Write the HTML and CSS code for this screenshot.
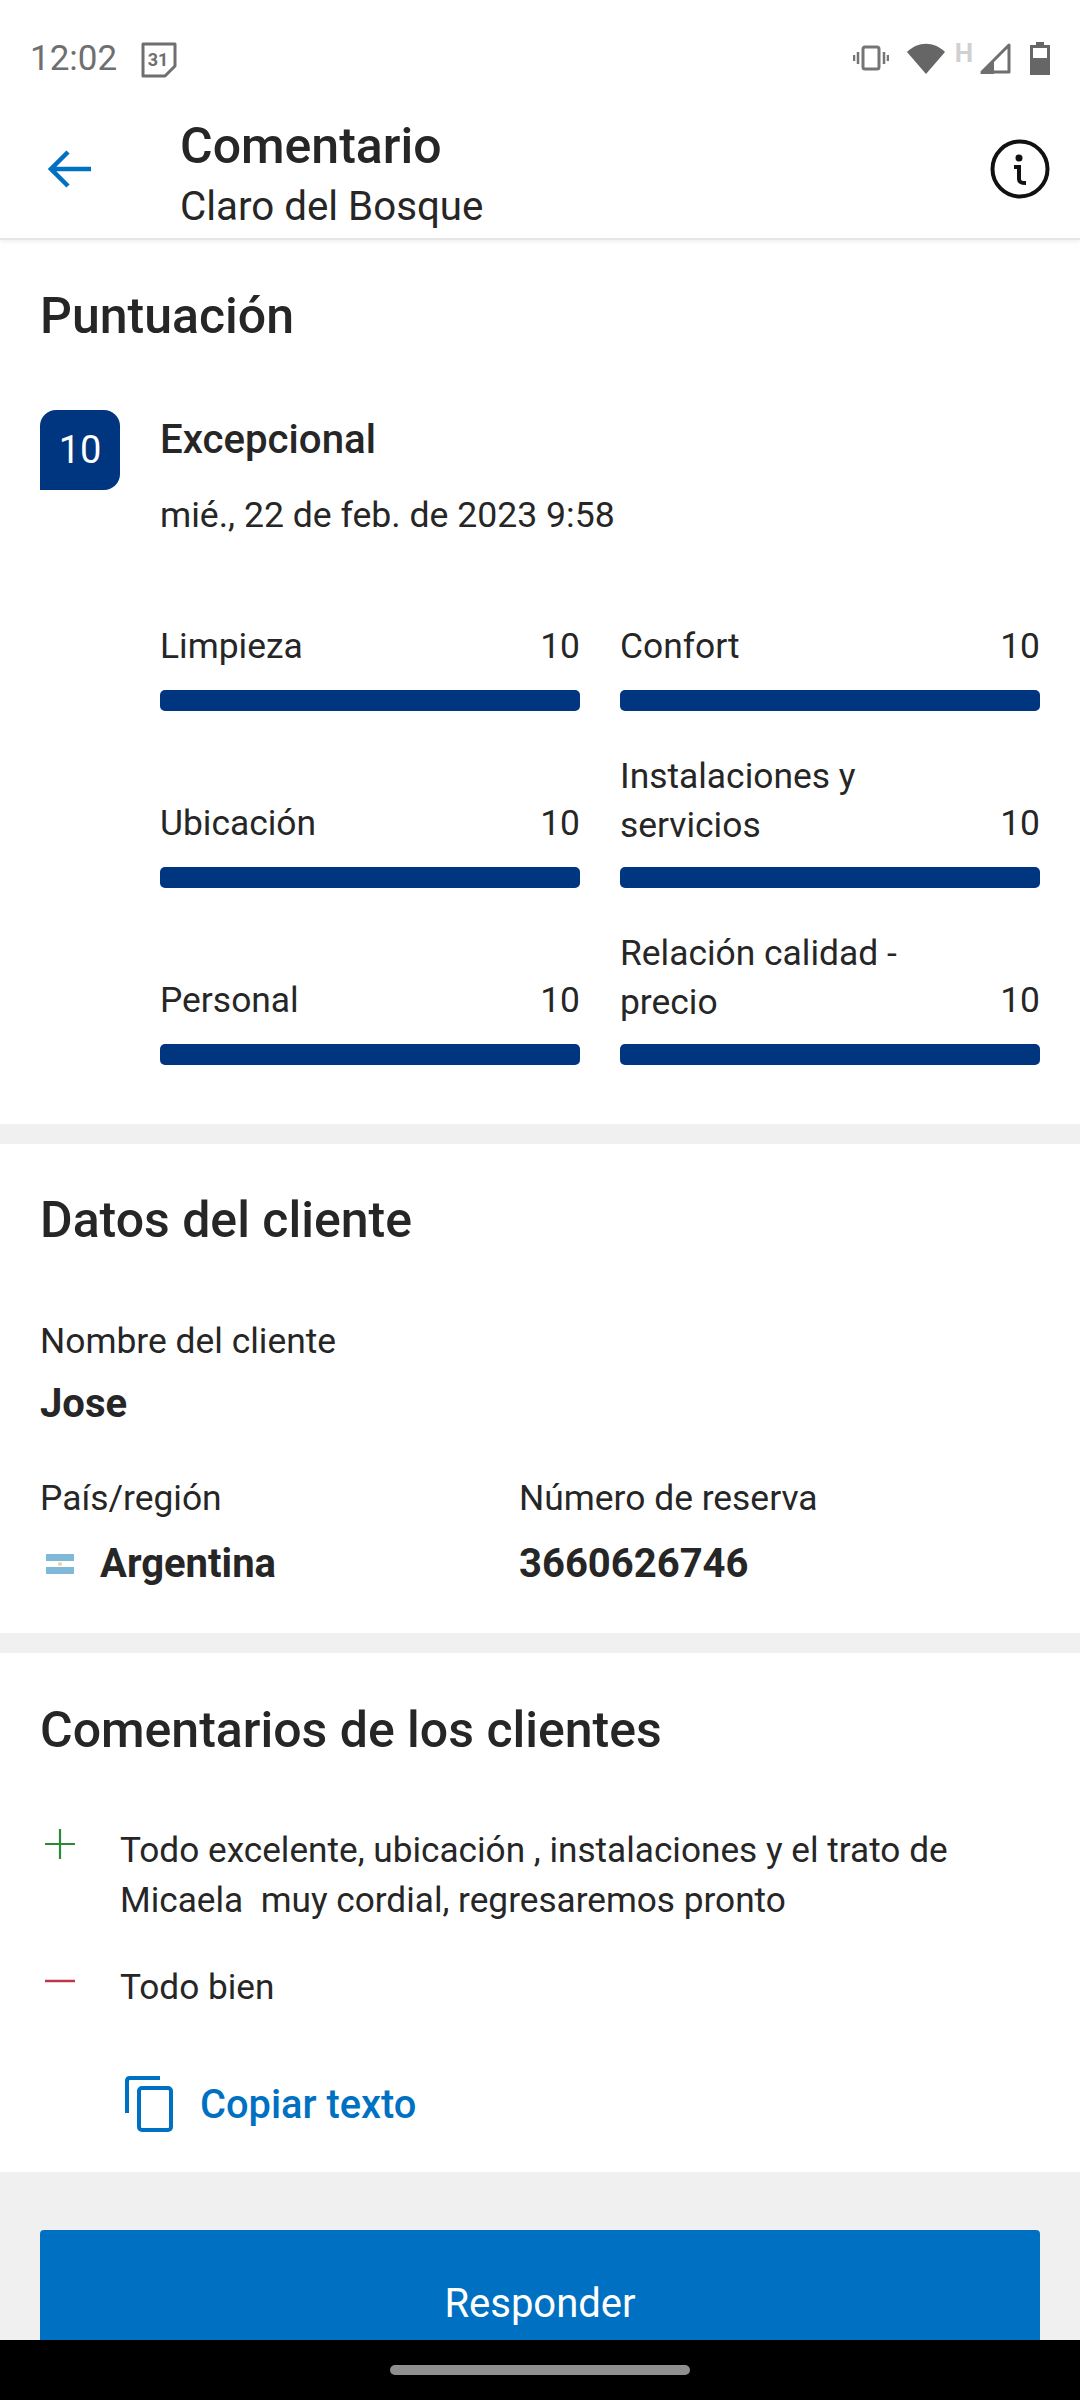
FILE: index.html
```html
<!DOCTYPE html>
<html>
  <head>
    <title>Comentario</title>
    <meta content="width=device-width,minimum-scale=1.0,maximum-scale=1.0,user-scalable=no" name="viewport">
    <link rel="stylesheet" href="styles.css">
  </head>
<body>
  <div class="screen">
    <div class="status-bar">
      <span class="status-time">12:02</span>
      <svg class="status-calendar" width="36" height="36" viewBox="0 0 36 36">
        <path d="M2 2h32v22l-10 10H2z" fill="none" stroke="#6f6f6f" stroke-width="3" stroke-linejoin="round"/>
        <text x="17" y="24" text-anchor="middle" class="calendar-day">31</text>
      </svg>
      <div class="status-icons">
        <svg width="36" height="26" viewBox="0 0 36 26">
          <rect x="10" y="2" width="16" height="22" rx="2" fill="none" stroke="#757575" stroke-width="3"/>
          <path d="M5 7v12M1 10v6M31 7v12M35 10v6" stroke="#757575" stroke-width="2.5"/>
        </svg>
        <svg class="icon-wifi" width="38" height="32" viewBox="0 0 38 32">
          <path d="M19 32L0 10C11 -1 27 -1 38 10z" fill="#666"/>
        </svg>
        <span class="status-h">H</span>
        <svg class="icon-signal" width="32" height="32" viewBox="0 0 32 32">
          <path d="M30 3v27H3z" fill="none" stroke="#6f6f6f" stroke-width="3" stroke-linejoin="round"/>
          <path d="M1 32L15 18v14z" fill="#6f6f6f"/>
        </svg>
        <svg class="icon-battery" width="20" height="33" viewBox="0 0 20 33">
          <path d="M6 0h8v3h6v30H0V3h6z" fill="#666"/>
          <rect x="3" y="6" width="14" height="10" fill="#fff"/>
        </svg>
      </div>
    </div>

    <header class="top-bar">
      <svg class="back-arrow" width="44" height="40" viewBox="0 0 44 40">
        <path d="M43 20H4M20 3L3 20l17 17" fill="none" stroke="#0071c2" stroke-width="4.5"/>
      </svg>
      <div class="top-titles">
        <h1>Comentario</h1>
        <p>Claro del Bosque</p>
      </div>
      <svg class="info-icon" width="60" height="60" viewBox="0 0 60 60">
        <circle cx="30" cy="30" r="27.5" fill="none" stroke="#111" stroke-width="4"/>
        <circle cx="29" cy="19" r="3.5" fill="#111"/>
        <path d="M24 28h5v12c0 3 2 4 7 4" fill="none" stroke="#111" stroke-width="4"/>
      </svg>
    </header>

    <section class="card card-score">
      <h2>Puntuación</h2>
      <div class="score">
        <div class="score-badge">10</div>
        <div>
          <div class="score-title">Excepcional</div>
          <div class="score-date">mié., 22 de feb. de 2023 9:58</div>
        </div>
      </div>
      <div class="ratings">
        <div class="rating">
          <div class="rating-head"><span>Limpieza</span><span>10</span></div>
          <div class="rating-bar"></div>
        </div>
        <div class="rating">
          <div class="rating-head"><span>Confort</span><span>10</span></div>
          <div class="rating-bar"></div>
        </div>
        <div class="rating">
          <div class="rating-head"><span>Ubicación</span><span>10</span></div>
          <div class="rating-bar"></div>
        </div>
        <div class="rating">
          <div class="rating-head"><span class="rating-long">Instalaciones y servicios</span><span>10</span></div>
          <div class="rating-bar"></div>
        </div>
        <div class="rating">
          <div class="rating-head"><span>Personal</span><span>10</span></div>
          <div class="rating-bar"></div>
        </div>
        <div class="rating">
          <div class="rating-head"><span class="rating-long">Relación calidad - precio</span><span>10</span></div>
          <div class="rating-bar"></div>
        </div>
      </div>
    </section>

    <section class="card card-guest">
      <h2>Datos del cliente</h2>
      <div class="field field-name">
        <div class="field-label">Nombre del cliente</div>
        <div class="field-value">Jose</div>
      </div>
      <div class="field-row">
        <div class="field">
          <div class="field-label">País/región</div>
          <div class="field-value country">
            <svg width="28" height="20" viewBox="0 0 28 20">
              <rect width="28" height="20" fill="#7fb8d8"/>
              <rect y="7" width="28" height="6" fill="#fff"/>
              <circle cx="14" cy="10" r="2" fill="#e8d9a0"/>
            </svg>
            Argentina
          </div>
        </div>
        <div class="field">
          <div class="field-label">Número de reserva</div>
          <div class="field-value">3660626746</div>
        </div>
      </div>
    </section>

    <section class="card card-comments">
      <h2>Comentarios de los clientes</h2>
      <div class="comment comment-plus">
        <svg width="30" height="30" viewBox="0 0 30 30">
          <path d="M0 15h30M15 0v30" stroke="#2a8a36" stroke-width="2.2"/>
        </svg>
        <p>Todo excelente, ubicación , instalaciones y el trato de Micaela&nbsp; muy cordial, regresaremos pronto</p>
      </div>
      <div class="comment comment-minus">
        <svg width="30" height="30" viewBox="0 0 30 30">
          <path d="M0 15h30" stroke="#b8384a" stroke-width="2.5"/>
        </svg>
        <p>Todo bien</p>
      </div>
      <div class="copy-link">
        <svg width="48" height="56" viewBox="0 0 48 56">
          <path d="M2 37V5q0-3 3-3h30" fill="none" stroke="#0071c2" stroke-width="4"/>
          <rect x="14" y="12" width="32" height="42" rx="3" fill="none" stroke="#0071c2" stroke-width="4"/>
        </svg>
        <span>Copiar texto</span>
      </div>
    </section>

    <div class="actions">
      <button type="button">Responder</button>
    </div>

    <div class="nav-bar"><div class="nav-handle"></div></div>
  </div>
</body>
</html>
```

FILE: styles.css
```css
html, body {
  margin: 0;
  padding: 0;
}

body {
  background: #f0f0f0;
  color: #262626;
  font-family: Roboto, "Noto Sans", sans-serif;
}

h1, h2, p {
  margin: 0;
}

.screen {
  position: relative;
  width: 1080px;
  height: 2400px;
  overflow: hidden;
}

/* status bar */
.status-bar {
  display: flex;
  align-items: center;
  height: 100px;
  padding: 38px 30px 22px;
  box-sizing: border-box;
  background: white;
}

.status-time {
  font-size: 35px;
  color: #6f6f6f;
}

.status-calendar {
  margin: 3px 0 0 24px;
}

.calendar-day {
  font-family: Roboto, sans-serif;
  font-size: 18px;
  font-weight: 700;
  fill: #6f6f6f;
}

.status-icons {
  display: flex;
  align-items: center;
  gap: 18px;
  margin-left: auto;
}

.status-h {
  font-size: 26px;
  font-weight: 700;
  color: #d0d0d0;
  margin: -10px -12px 0 -8px;
}

.icon-battery {
  margin-left: 1px;
}

/* top bar */
.top-bar {
  display: flex;
  align-items: center;
  height: 140px;
  padding: 0 30px 0 48px;
  box-sizing: border-box;
  background: white;
  border-bottom: 2px solid #e6e6e6;
  box-shadow: 0 2px 4px rgba(0, 0, 0, 0.06);
  position: relative;
}

.top-titles {
  flex: 1;
  margin-left: 88px;
  padding-top: 16px;
}

.top-titles h1 {
  font-size: 50px;
  font-weight: 500;
  line-height: 60px;
}

.top-titles p {
  font-size: 40.3px;
  line-height: 62px;
}

/* sections */
.card {
  background: white;
  padding: 0 40px;
  box-sizing: border-box;
  margin-bottom: 20px;
}

.card h2 {
  font-size: 50px;
  font-weight: 500;
  line-height: 60px;
}

.card-score {
  height: 884px;
  padding-top: 46px;
}

.score {
  display: flex;
  gap: 40px;
  margin-top: 64px;
}

.score-badge {
  width: 80px;
  height: 80px;
  background: #003580;
  color: white;
  font-size: 38px;
  line-height: 80px;
  text-align: center;
  border-radius: 16px 16px 16px 0;
}

.score-title {
  font-size: 40.2px;
  font-weight: 500;
  line-height: 50px;
  margin-top: 5px;
}

.score-date {
  font-size: 35.6px;
  line-height: 50px;
  margin-top: 25px;
}

.ratings {
  display: grid;
  grid-template-columns: 420px 420px;
  column-gap: 40px;
  row-gap: 28px;
  margin: 22px 0 0 120px;
}

.rating {
  display: flex;
  flex-direction: column;
  justify-content: flex-end;
  height: 149px;
}

.rating-head {
  display: flex;
  justify-content: space-between;
  align-items: flex-end;
  font-size: 35.4px;
  line-height: 49px;
}

.rating-long {
  width: 300px;
  margin-bottom: -2px;
}

.rating-bar {
  height: 21px;
  margin-top: 19px;
  background: #003580;
  border-radius: 5px;
}

.card-guest {
  height: 489px;
  padding-top: 46px;
}

.field-name {
  margin-top: 68px;
}

.field-label {
  font-size: 35.4px;
  line-height: 46px;
}

.field-value {
  font-size: 40px;
  font-weight: 700;
  line-height: 50px;
  margin-top: 15px;
}

.field-row {
  display: grid;
  grid-template-columns: 479px 1fr;
  margin-top: 46px;
}

.field-row .field-value {
  margin-top: 18px;
}

.country {
  display: flex;
  align-items: center;
  gap: 26px;
}

.country svg {
  margin-left: 6px;
}

.card-comments {
  height: 519px;
  padding-top: 47px;
  margin-bottom: 0;
}

.comment {
  display: flex;
}

.comment svg {
  flex: none;
  margin: 4px 46px 0 5px;
}

.comment p {
  font-size: 35.2px;
  line-height: 50px;
  margin-left: -1px;
}

.comment-plus {
  margin-top: 65px;
}

.comment-minus {
  margin-top: 37px;
}

.copy-link {
  display: flex;
  align-items: center;
  gap: 27px;
  margin: 64px 0 0 85px;
  color: #0071c2;
  font-size: 39.8px;
  font-weight: 500;
}

.actions {
  padding: 58px 40px 0;
}

.actions button {
  display: block;
  width: 100%;
  height: 146px;
  padding: 0;
  border: 0;
  border-radius: 4px;
  background: #0071c2;
  color: white;
  font-family: Roboto, sans-serif;
  font-size: 40px;
  cursor: pointer;
}

/* system gesture bar */
.nav-bar {
  position: absolute;
  left: 0;
  right: 0;
  bottom: 0;
  height: 60px;
  background: black;
}

.nav-handle {
  width: 300px;
  height: 10px;
  margin: 25px auto 0;
  border-radius: 5px;
  background: #8f8f8f;
}
```
